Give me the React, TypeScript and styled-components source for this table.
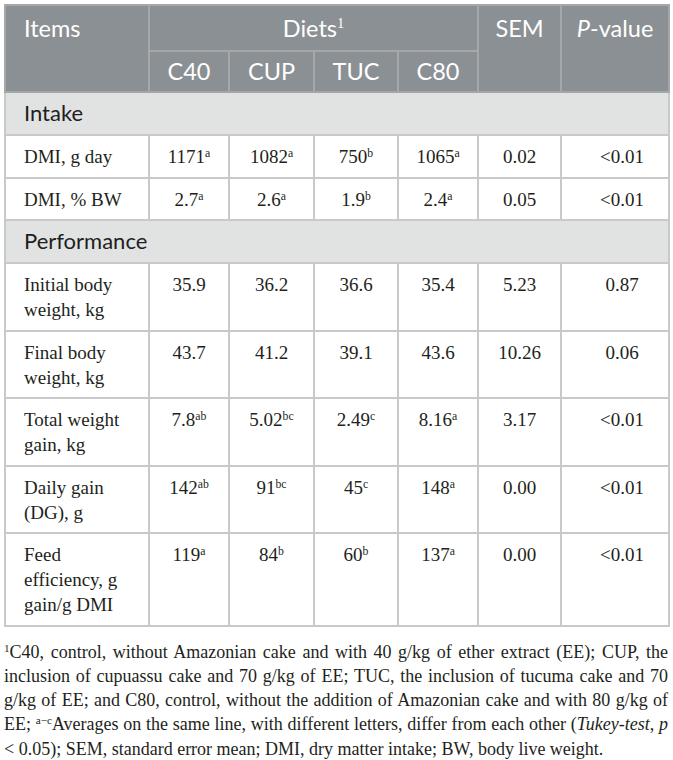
import React from "react";
import styled, { createGlobalStyle } from "styled-components";

const Global = createGlobalStyle`
  html, body { margin: 0; padding: 0; background: #ffffff; }
  body { font-family: "Liberation Serif", "Times New Roman", serif; color: #231f20; }
`;

const Page = styled.div`
  padding: 4px 5px 0 4px;
  width: 673px;
  box-sizing: border-box;
`;

const Table = styled.table`
  width: 664px;
  table-layout: fixed;
  border-collapse: collapse;
  border: 2px solid #c9c9c9;
`;

const HeadCell = styled.th<{ $align?: string; $pl?: number; $pt?: number }>`
  background: #8b9094;
  color: #ffffff;
  font-family: Lato, "Open Sans", sans-serif;
  font-weight: 400;
  font-size: 23.5px;
  line-height: 28px;
  text-align: ${(p) => p.$align || "center"};
  vertical-align: top;
  padding: ${(p) => p.$pt ?? 8}px 4px ${(p) => p.$pt ?? 8}px ${(p) => p.$pl ?? 4}px;
  border: 2px solid #a4a8aa;
`;

const HeadRow = styled.tr<{ $h: number }>`
  height: ${(p) => p.$h}px;
`;

const SectionCell = styled.td`
  background: #e1e3e2;
  font-family: Lato, "Open Sans", sans-serif;
  font-size: 22px;
  line-height: 26px;
  padding: 7px 18px 8px 18px;
  border: 2px solid #c9c9c9;
  color: #1e1e1e;
`;

const Cell = styled.td<{ $left?: boolean; $pl?: number }>`
  font-family: "Liberation Serif", "Times New Roman", serif;
  font-size: 19px;
  line-height: 25px;
  text-align: ${(p) => (p.$left ? "left" : "center")};
  vertical-align: top;
  padding: 8px ${(p) => (p.$left ? 12 : 4)}px 7.5px ${(p) => (p.$left ? 18 : p.$pl ?? 4)}px;
  border: 2px solid #c9c9c9;
  color: #231f20;
`;

const Sup = styled.sup`
  font-size: 0.62em;
  line-height: 0;
  vertical-align: 0.55em;
`;

const HeadSup = styled.sup`
  font-family: "Liberation Serif", serif;
  font-size: 0.62em;
  line-height: 0;
  vertical-align: 0.6em;
`;

const Footnote = styled.p`
  margin: 13px 0 0 0;
  font-family: "Liberation Serif", "Times New Roman", serif;
  font-size: 18px;
  line-height: 24.3px;
  text-align: justify;
  color: #231f20;
`;

type Val = [string, string?];
type Row = { label: string; vals: Val[]; sem: string; p: string };

const intake: Row[] = [
  { label: "DMI, g day", vals: [["1171", "a"], ["1082", "a"], ["750", "b"], ["1065", "a"]], sem: "0.02", p: "<0.01" },
  { label: "DMI, % BW", vals: [["2.7", "a"], ["2.6", "a"], ["1.9", "b"], ["2.4", "a"]], sem: "0.05", p: "<0.01" },
];

const performance: Row[] = [
  { label: "Initial body weight, kg", vals: [["35.9"], ["36.2"], ["36.6"], ["35.4"]], sem: "5.23", p: "0.87" },
  { label: "Final body weight, kg", vals: [["43.7"], ["41.2"], ["39.1"], ["43.6"]], sem: "10.26", p: "0.06" },
  { label: "Total weight gain, kg", vals: [["7.8", "ab"], ["5.02", "bc"], ["2.49", "c"], ["8.16", "a"]], sem: "3.17", p: "<0.01" },
  { label: "Daily gain (DG), g", vals: [["142", "ab"], ["91", "bc"], ["45", "c"], ["148", "a"]], sem: "0.00", p: "<0.01" },
  { label: "Feed efficiency, g gain/g DMI", vals: [["119", "a"], ["84", "b"], ["60", "b"], ["137", "a"]], sem: "0.00", p: "<0.01" },
];

const DataRow = ({ row }: { row: Row }) => (
  <tr>
    <Cell $left>{row.label}</Cell>
    {row.vals.map(([v, s], i) => (
      <Cell key={i}>
        {v}
        {s && <Sup>{s}</Sup>}
      </Cell>
    ))}
    <Cell>{row.sem}</Cell>
    <Cell $pl={18}>{row.p}</Cell>
  </tr>
);

export default function App() {
  return (
    <Page>
      <Global />
      <Table>
        <colgroup>
          <col style={{ width: 144 }} />
          <col style={{ width: 80 }} />
          <col style={{ width: 85 }} />
          <col style={{ width: 84 }} />
          <col style={{ width: 80 }} />
          <col style={{ width: 83 }} />
          <col style={{ width: 108 }} />
        </colgroup>
        <thead>
          <HeadRow $h={46}>
            <HeadCell rowSpan={2} $align="left" $pl={18}>Items</HeadCell>
            <HeadCell colSpan={4}>
              Diets<HeadSup>1</HeadSup>
            </HeadCell>
            <HeadCell rowSpan={2}>SEM</HeadCell>
            <HeadCell rowSpan={2}>
              <i>P</i>-value
            </HeadCell>
          </HeadRow>
          <HeadRow $h={41}>
            <HeadCell $pt={5}>C40</HeadCell>
            <HeadCell $pt={5}>CUP</HeadCell>
            <HeadCell $pt={5}>TUC</HeadCell>
            <HeadCell $pt={5}>C80</HeadCell>
          </HeadRow>
        </thead>
        <tbody>
          <tr>
            <SectionCell colSpan={7}>Intake</SectionCell>
          </tr>
          {intake.map((r) => (
            <DataRow key={r.label} row={r} />
          ))}
          <tr>
            <SectionCell colSpan={7}>Performance</SectionCell>
          </tr>
          {performance.map((r) => (
            <DataRow key={r.label} row={r} />
          ))}
        </tbody>
      </Table>
      <Footnote>
        <Sup>1</Sup>C40, control, without Amazonian cake and with 40 g/kg of ether extract (EE); CUP, the
        inclusion of cupuassu cake and 70 g/kg of EE; TUC, the inclusion of tucuma cake and 70 g/kg of EE;
        and C80, control, without the addition of Amazonian cake and with 80 g/kg of EE; <Sup>a−c</Sup>Averages
        on the same line, with different letters, differ from each other (<i>Tukey-test</i>, <i>p</i> &lt; 0.05);
        SEM, standard error mean; DMI, dry matter intake; BW, body live weight.
      </Footnote>
    </Page>
  );
}
